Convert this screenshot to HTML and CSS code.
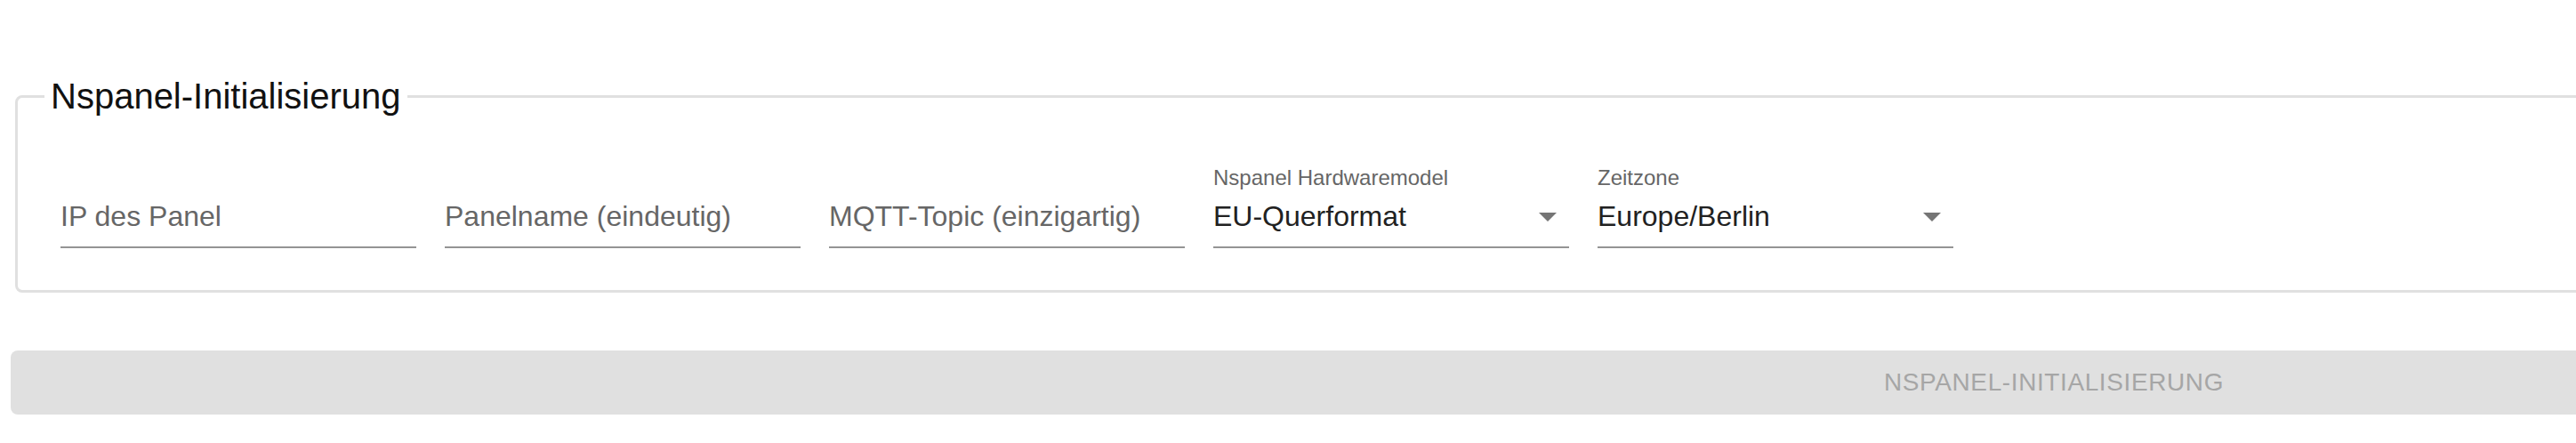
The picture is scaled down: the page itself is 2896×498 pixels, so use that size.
FILE: index.html
```html
<!DOCTYPE html>
<html lang="de">
<head>
  <meta charset="UTF-8">
  <meta name="viewport" content="width=device-width, initial-scale=1.0">
  <title>Nspanel-Initialisierung</title>
  <link rel="stylesheet" href="styles.css">
</head>
<body>

  <div class="page">
    <fieldset class="init-box">
      <legend>Nspanel-Initialisierung</legend>

      <div class="field-row">
        <div class="field">
          <span class="field-label"></span>
          <div class="field-control placeholder">IP des Panel</div>
        </div>
        <div class="field">
          <span class="field-label"></span>
          <div class="field-control placeholder">Panelname (eindeutig)</div>
        </div>
        <div class="field">
          <span class="field-label"></span>
          <div class="field-control placeholder">MQTT-Topic (einzigartig)</div>
        </div>
        <div class="field">
          <span class="field-label">Nspanel Hardwaremodel</span>
          <div class="field-control select">
            <span class="value">EU-Querformat</span>
            <svg class="arrow" width="20" height="10" viewBox="0 0 20 10"><path d="M0 0 L20 0 L10 10 Z"/></svg>
          </div>
        </div>
        <div class="field">
          <span class="field-label">Zeitzone</span>
          <div class="field-control select">
            <span class="value">Europe/Berlin</span>
            <svg class="arrow" width="20" height="10" viewBox="0 0 20 10"><path d="M0 0 L20 0 L10 10 Z"/></svg>
          </div>
        </div>
      </div>
    </fieldset>

    <button class="init-button" disabled>Nspanel-Initialisierung</button>
  </div>

</body>
</html>
```

FILE: styles.css
```css
html, body {
  overflow: hidden;
}
body {
  font-family: 'Liberation Sans', Arial, sans-serif;
  background-color: #fff;
  margin: 0;
  padding: 0;
}
.page {
  width: 4594px;
  padding: 84px 0 0 12px;
}
.init-box {
  margin: 0 4px 0 5px;
  padding: 54px 48px 47px 48px;
  border: 3px solid #e0e0e0;
  border-radius: 8px;
}
.init-box legend {
  font-size: 40px;
  line-height: 48px;
  color: #111;
  padding: 0 7px;
  margin-left: -18px;
}
.field-row {
  display: flex;
  gap: 32px;
}
.field {
  width: 400px;
  display: flex;
  flex-direction: column;
}
.field-label {
  display: block;
  height: 28px;
  font-size: 24px;
  line-height: 28px;
  color: #666;
}
.field-control {
  display: flex;
  align-items: center;
  padding: 6px 0 11px 0;
  font-size: 32px;
  line-height: 46px;
  height: 46px;
  border-bottom: 2px solid #949494;
}
.placeholder {
  color: #666;
}
.select {
  color: #212121;
  justify-content: space-between;
}
.arrow {
  fill: #757575;
  margin-right: 14px;
  margin-top: 2px;
}
.init-button {
  display: block;
  width: 100%;
  height: 72px;
  margin-top: 65px;
  border: none;
  border-radius: 8px;
  background-color: #e0e0e0;
  color: #a6a6a6;
  font-family: 'Liberation Sans', Arial, sans-serif;
  font-size: 28px;
  letter-spacing: 0.6px;
  text-transform: uppercase;
}
```
